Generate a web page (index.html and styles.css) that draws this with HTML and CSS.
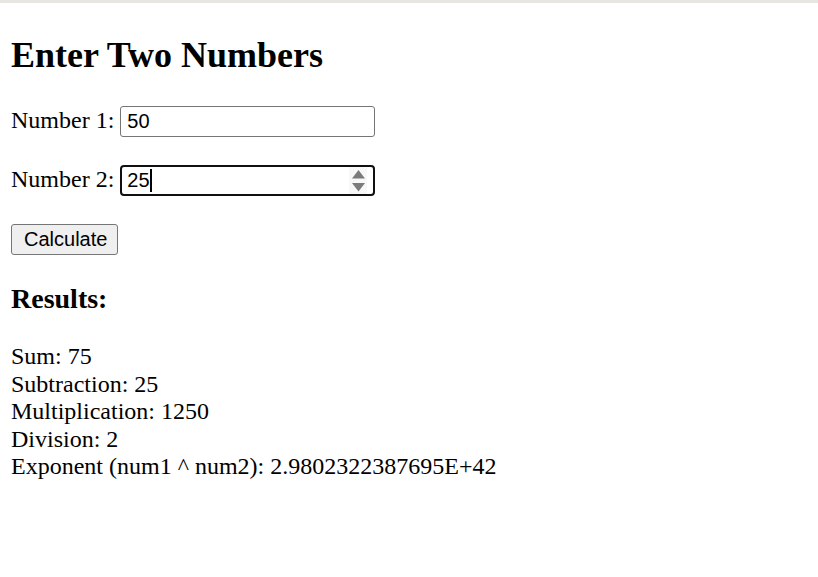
FILE: index.html
```html
<!DOCTYPE html>
<html>
<head>
<meta charset="utf-8">
<title>Calculator</title>
<link rel="stylesheet" href="styles.css">
</head>
<body>
<h2 class="title">Enter Two Numbers</h2>
<form class="calc">
  <label class="label">Number 1:</label> <span class="field"><span class="val">50</span></span>
  <br><br>
  <label class="label">Number 2:</label> <span class="field focused"><span class="val">25</span><span class="caret"></span><span class="spin"><svg width="13" height="24" viewBox="0 0 13 24"><path d="M6.5 1 L13 9.5 L0 9.5 Z" fill="#7b7b7b"/><path d="M0 14 L13 14 L6.5 22.5 Z" fill="#7b7b7b"/></svg></span></span>
  <br><br>
  <button type="button" class="btn">Calculate</button>
</form>
<h3 class="results-title">Results:</h3>
<div class="results">
  Sum: 75<br>
  Subtraction: 25<br>
  Multiplication: 1250<br>
  Division: 2<br>
  Exponent (num1 ^ num2): 2.9802322387695E+42
</div>
</body>
</html>
```
FILE: styles.css
```css
html {
  border-top: 3px solid #e8e6e3;
  background: #fff;
}
body {
  margin: 12px 11px;
  font-family: "Liberation Serif", "Times New Roman", serif;
  font-size: 24px;
  color: #000;
}
.title {
  font-size: 36px;
  margin: 19px 0 30px;
}
.calc {
  margin: 0;
}
.field {
  display: inline-block;
  position: relative;
  box-sizing: border-box;
  width: 255px;
  height: 31px;
  line-height: 29px;
  border: 1px solid #767676;
  border-radius: 3px;
  padding: 0 6px;
  margin-bottom: 1px;
  font-family: "Liberation Sans", Arial, sans-serif;
  font-size: 20px;
  vertical-align: baseline;
}
.field.focused {
  border: 2px solid #101010;
  border-radius: 4px;
  line-height: 27px;
  padding: 0 5px;
}
.caret {
  display: inline-block;
  width: 2px;
  height: 23px;
  background: #000;
  vertical-align: -5px;
}
.spin {
  position: absolute;
  right: 6px;
  top: 0;
  display: flex;
  align-items: center;
  justify-content: center;
  width: 18px;
  height: 27px;
  background: #f8f8f8;
}
.spin svg {
  display: block;
}
.btn {
  box-sizing: border-box;
  width: 107px;
  height: 31px;
  font-family: "Liberation Sans", Arial, sans-serif;
  font-size: 20px;
  background: #efefef;
  border: 1px solid #767676;
  border-radius: 3px;
  padding: 0 12px;
  color: #000;
}
.results-title {
  font-size: 28px;
  margin: 28px 0;
}
.results {
  line-height: 27.5px;
}
```
